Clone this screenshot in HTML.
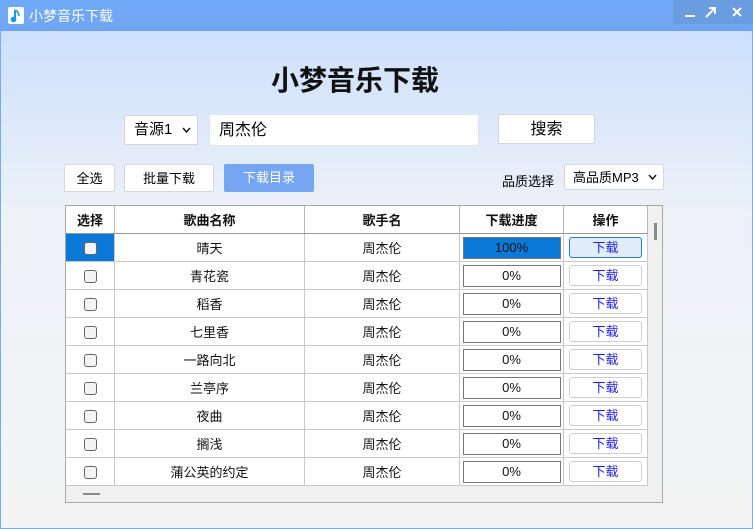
<!DOCTYPE html>
<html><head><meta charset="utf-8"><style>
*{box-sizing:border-box;margin:0;padding:0}
body{width:753px;height:529px;overflow:hidden;font-family:"Liberation Sans","Noto Sans CJK SC",sans-serif;position:relative;background:linear-gradient(#cde0fc 0px,#cde0fc 31px,#eef2f8 220px,#f4f4f4 529px)}
.tb{position:absolute;left:0;top:0;width:753px;height:31px;background:linear-gradient(#6fa9f8,#70a5f3)}
.tb .t{position:absolute;left:29px;top:6px;color:#fff;font-size:14px}
.ic{position:absolute;left:8px;top:7px;width:16px;height:17px;background:#fff;border-radius:2px}
.ctl{position:absolute;left:673px;top:0;width:80px;height:24px;background:#6a9ce0;color:#fff}
.frame{position:absolute;left:0;top:31px;width:753px;height:498px;border:1px solid #6eb0f5;border-top:none}
.a{position:absolute}
.btn{position:absolute;background:#fff;border:1px solid #d6d6d6;border-radius:2px;font-size:13px;text-align:center}
h1{position:absolute;left:0;width:710px;top:59px;text-align:center;font-size:28px;font-weight:bold;color:#111}
table{border-collapse:collapse;font-size:13px;table-layout:fixed}
td,th{border:1px solid #c8c8c8;text-align:center;height:28px;padding:0;color:#111}
th{font-weight:bold;border-color:#b8b8b8;border-bottom:1px solid #999}
.cb{display:inline-block;width:13px;height:13px;border:1px solid #666;border-radius:3px;background:#f4f4f4;vertical-align:middle}
.pg{display:inline-block;width:98px;height:22px;border:1px solid #777;line-height:20px;font-size:13px;vertical-align:middle}
.dl{display:inline-block;width:73px;height:21px;border:1px solid #d0d0d0;border-radius:3px;color:#2020e8;line-height:19px;background:#fff;vertical-align:middle;font-size:13px}
.chev{position:absolute;right:6px;top:50%;margin-top:-3px}
</style></head><body>
<div class="tb"><div class="ic"><svg width="16" height="17"><path d="M7 3 L7 12" stroke="#1a9be0" stroke-width="2"/><circle cx="5.5" cy="12.5" r="2.8" fill="#1a9be0"/><path d="M7 3 Q11 5 11 9" stroke="#1a9be0" stroke-width="1.6" fill="none"/></svg></div><div class="t">小梦音乐下载</div></div>
<div class="ctl"><svg width="80" height="24"><path d="M12 16H22" stroke="#fff" stroke-width="2"/><path d="M33 17L42 8M36 8H42V14" stroke="#fff" stroke-width="2" fill="none"/><path d="M60 8L68 16M68 8L60 16" stroke="#fff" stroke-width="2"/></svg></div>
<div class="frame"></div>
<h1>小梦音乐下载</h1>
<div class="btn" style="left:124px;top:115px;width:74px;height:30px;line-height:28px;font-size:15px;text-align:left;padding-left:9px">音源1<svg class="chev" width="9" height="6"><path d="M1 1L4.5 5L8 1" stroke="#111" stroke-width="1.4" fill="none"/></svg></div>
<div class="a" style="left:209px;top:114px;width:270px;height:32px;background:#fff;border:1px solid #e4e4e4;font-size:16px;line-height:32px;padding-left:9px">周杰伦</div>
<div class="btn" style="left:498px;top:114px;width:97px;height:30px;line-height:30px;font-size:16px">搜索</div>
<div class="btn" style="left:64px;top:164px;width:51px;height:28px;line-height:27px">全选</div>
<div class="btn" style="left:124px;top:164px;width:90px;height:28px;line-height:27px">批量下载</div>
<div class="a" style="left:224px;top:164px;width:90px;height:28px;line-height:28px;background:#76a6f2;color:#fff;font-size:13px;text-align:center;border-radius:2px">下载目录</div>
<div class="a" style="left:502px;top:171px;font-size:13px">品质选择</div>
<div class="btn" style="left:564px;top:164px;width:100px;height:26px;line-height:25px;text-align:left;padding-left:8px">高品质MP3<svg class="chev" width="9" height="6"><path d="M1 1L4.5 5L8 1" stroke="#111" stroke-width="1.4" fill="none"/></svg></div>
<div class="a" style="left:65px;top:205px;width:598px;height:298px;border:1px solid #a8a8a8;background:#f0f0f0;overflow:hidden">
<table style="position:absolute;left:-1px;top:-1px;width:582px;background:#fff">
<colgroup><col style="width:49px"><col style="width:190px"><col style="width:155px"><col style="width:104px"><col style="width:84px"></colgroup>
<tr><th>选择</th><th>歌曲名称</th><th>歌手名</th><th>下载进度</th><th>操作</th></tr>
<tr><td style="background:#0a78d6"><span class="cb"></span></td><td>晴天</td><td>周杰伦</td><td><span class="pg" style="background:#0a78d6">100%</span></td><td><span class="dl" style="background:#e0ecf9;border-color:#2a7ad8">下载</span></td></tr>
<tr><td><span class="cb"></span></td><td>青花瓷</td><td>周杰伦</td><td><span class="pg">0%</span></td><td><span class="dl">下载</span></td></tr>
<tr><td><span class="cb"></span></td><td>稻香</td><td>周杰伦</td><td><span class="pg">0%</span></td><td><span class="dl">下载</span></td></tr>
<tr><td><span class="cb"></span></td><td>七里香</td><td>周杰伦</td><td><span class="pg">0%</span></td><td><span class="dl">下载</span></td></tr>
<tr><td><span class="cb"></span></td><td>一路向北</td><td>周杰伦</td><td><span class="pg">0%</span></td><td><span class="dl">下载</span></td></tr>
<tr><td><span class="cb"></span></td><td>兰亭序</td><td>周杰伦</td><td><span class="pg">0%</span></td><td><span class="dl">下载</span></td></tr>
<tr><td><span class="cb"></span></td><td>夜曲</td><td>周杰伦</td><td><span class="pg">0%</span></td><td><span class="dl">下载</span></td></tr>
<tr><td><span class="cb"></span></td><td>搁浅</td><td>周杰伦</td><td><span class="pg">0%</span></td><td><span class="dl">下载</span></td></tr>
<tr><td><span class="cb"></span></td><td>蒲公英的约定</td><td>周杰伦</td><td><span class="pg">0%</span></td><td><span class="dl">下载</span></td></tr>
</table>
<div class="a" style="left:588px;top:17px;width:3px;height:17px;background:#8a8a8a"></div>
<div class="a" style="left:17px;top:287px;width:17px;height:2px;background:#8a8a8a"></div>
</div>
</body></html>
